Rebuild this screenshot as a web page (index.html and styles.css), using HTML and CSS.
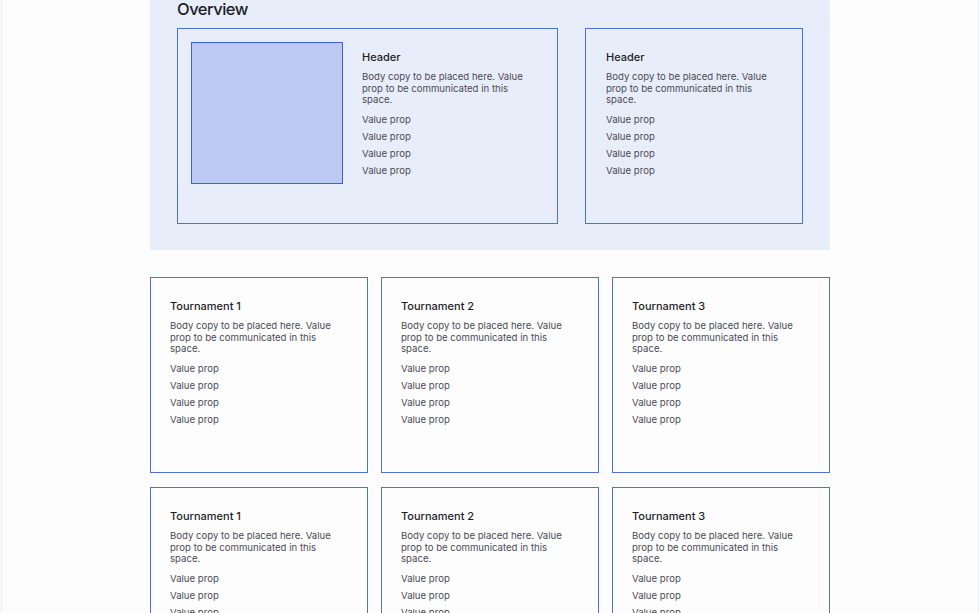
FILE: index.html
```html
<!DOCTYPE html>
<html>
<head>
<meta charset="utf-8">
<link rel="stylesheet" href="styles.css">
</head>
<body>
<div class="frame">
  <div class="page">
    <section class="overview">
      <h2 class="overview-title">Overview</h2>
      <div class="overview-row">
        <div class="card card-wide">
          <div class="thumb"></div>
          <div class="copy">
            <h3 class="card-title">Header</h3>
            <p class="body">Body copy to be placed here. Value prop to be communicated in this space.</p>
            <ul class="props"><li>Value prop</li><li>Value prop</li><li>Value prop</li><li>Value prop</li></ul>
          </div>
        </div>
        <div class="card card-narrow">
          <div class="copy">
            <h3 class="card-title">Header</h3>
            <p class="body">Body copy to be placed here. Value prop to be communicated in this space.</p>
            <ul class="props"><li>Value prop</li><li>Value prop</li><li>Value prop</li><li>Value prop</li></ul>
          </div>
        </div>
      </div>
    </section>
    <section class="grid">
      <div class="card tcard"><div class="copy"><h3 class="card-title">Tournament 1</h3><p class="body">Body copy to be placed here. Value prop to be communicated in this space.</p><ul class="props"><li>Value prop</li><li>Value prop</li><li>Value prop</li><li>Value prop</li></ul></div></div>
      <div class="card tcard"><div class="copy"><h3 class="card-title">Tournament 2</h3><p class="body">Body copy to be placed here. Value prop to be communicated in this space.</p><ul class="props"><li>Value prop</li><li>Value prop</li><li>Value prop</li><li>Value prop</li></ul></div></div>
      <div class="card tcard"><div class="copy"><h3 class="card-title">Tournament 3</h3><p class="body">Body copy to be placed here. Value prop to be communicated in this space.</p><ul class="props"><li>Value prop</li><li>Value prop</li><li>Value prop</li><li>Value prop</li></ul></div></div>
      <div class="card tcard"><div class="copy"><h3 class="card-title">Tournament 1</h3><p class="body">Body copy to be placed here. Value prop to be communicated in this space.</p><ul class="props"><li>Value prop</li><li>Value prop</li><li>Value prop</li><li>Value prop</li></ul></div></div>
      <div class="card tcard"><div class="copy"><h3 class="card-title">Tournament 2</h3><p class="body">Body copy to be placed here. Value prop to be communicated in this space.</p><ul class="props"><li>Value prop</li><li>Value prop</li><li>Value prop</li><li>Value prop</li></ul></div></div>
      <div class="card tcard"><div class="copy"><h3 class="card-title">Tournament 3</h3><p class="body">Body copy to be placed here. Value prop to be communicated in this space.</p><ul class="props"><li>Value prop</li><li>Value prop</li><li>Value prop</li><li>Value prop</li></ul></div></div>
    </section>
  </div>
</div>
</body>
</html>
```
FILE: styles.css
```css
html, body {
  margin: 0;
  padding: 0;
  background: #fdfdfd;
  font-family: Inter, "Noto Sans", sans-serif;
  color: #1d1d27;
  overflow: hidden;
}
.frame {
  margin: 0 0 0 1px;
  width: 976px;
  height: 613px;
  border-left: 1px solid #ecedfb;
  border-right: 1px solid #ecedfb;
  overflow: hidden;
}
.page {
  width: 680px;
  margin: 0 0 0 148px;
}
.overview {
  background: #e8edfa;
  padding: 0 27px 26px;
}
.overview-title {
  margin: 0 0 10px;
  font-size: 16.5px;
  line-height: 18px;
  font-weight: 500;
  letter-spacing: -0.5px;
  color: #1d1d27;
}
.overview-row {
  display: flex;
  gap: 27px;
}
.card {
  box-sizing: border-box;
  height: 196px;
  border: 1px solid #5071d9;
}
.card-wide {
  width: 381px;
  display: flex;
  padding: 13px 0 0 13px;
  gap: 19px;
}
.card-narrow {
  width: 218px;
  padding: 21px 20px 0 20px;
}
.thumb {
  box-sizing: border-box;
  width: 152px;
  height: 142px;
  background: #bccaf3;
  border: 1px solid #3f60d3;
  flex: none;
}
.card-wide .copy {
  width: 176px;
  padding-top: 8px;
}
.card-title {
  margin: 0;
  font-size: 11px;
  line-height: 14px;
  font-weight: 500;
  color: #1d1d27;
}
.body {
  margin: 7px 0 0;
  font-size: 9.6px;
  line-height: 11.5px;
  color: #4a4a55;
}
.props {
  list-style: none;
  margin: 5px 0 0;
  padding: 0;
  font-size: 9.6px;
  line-height: 17px;
  color: #4a4a55;
}
.grid {
  margin-top: 27px;
  display: grid;
  grid-template-columns: repeat(3, 218px);
  column-gap: 13px;
  row-gap: 14px;
}
.tcard {
  background: #fdfdfd;
  padding: 21px 19px 0 19px;
}
```
